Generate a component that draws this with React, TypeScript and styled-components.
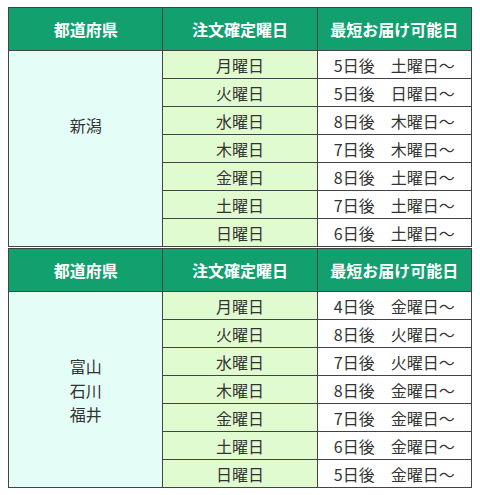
import React from "react";
import styled, { createGlobalStyle } from "styled-components";

const Global = createGlobalStyle`
  body {
    margin: 0;
    padding: 7px 8px;
    background: #ffffff;
    font-family: "Noto Sans CJK JP", "Noto Sans", sans-serif;
    color: #333333;
  }
`;

const Wrap = styled.div`
  width: 464px;
  display: flex;
  flex-direction: column;
  gap: 1px;
`;

const Table = styled.table`
  width: 464px;
  border-collapse: collapse;
  table-layout: fixed;
  border: 1px solid #444;
`;

const Th = styled.th`
  background: #12a06f;
  color: #ffffff;
  font-weight: 700;
  font-size: 16px;
  line-height: 24px;
  height: 42px;
  padding: 0;
  border: 1px solid #444;
  text-align: center;
`;

const Td = styled.td<{ $kind: "pref" | "day" | "deliv" }>`
  font-size: 16px;
  line-height: 24px;
  height: 27px;
  padding: 0;
  border: 1px solid #444;
  text-align: center;
  vertical-align: middle;
  color: #333;
  background: ${(p) =>
    p.$kind === "pref" ? "#e4fdf6" : p.$kind === "day" ? "#e1fbd0" : "#ffffff"};
`;

const Blank = styled.div`
  height: 24px;
`;

type Block = { prefs: string[]; blankLines: number; rows: [string, string][] };

const days = ["月曜日", "火曜日", "水曜日", "木曜日", "金曜日", "土曜日", "日曜日"];

const blocks: Block[] = [
  {
    prefs: ["新潟"],
    blankLines: 2,
    rows: [
      ["5日後", "土曜日"],
      ["5日後", "日曜日"],
      ["8日後", "木曜日"],
      ["7日後", "木曜日"],
      ["8日後", "土曜日"],
      ["7日後", "土曜日"],
      ["6日後", "土曜日"],
    ],
  },
  {
    prefs: ["富山", "石川", "福井"],
    blankLines: 0,
    rows: [
      ["4日後", "金曜日"],
      ["8日後", "火曜日"],
      ["7日後", "火曜日"],
      ["8日後", "金曜日"],
      ["7日後", "金曜日"],
      ["6日後", "金曜日"],
      ["5日後", "金曜日"],
    ],
  },
];

export default function App() {
  return (
    <>
      <Global />
      <Wrap>
        {blocks.map((b, bi) => (
          <Table key={bi}>
            <thead>
              <tr>
                <Th>都道府県</Th>
                <Th>注文確定曜日</Th>
                <Th>最短お届け可能日</Th>
              </tr>
            </thead>
            <tbody>
              {b.rows.map((r, i) => (
                <tr key={i}>
                  {i === 0 && (
                    <Td $kind="pref" rowSpan={7}>
                      {b.prefs.map((p) => (
                        <div key={p}>{p}</div>
                      ))}
                      {Array.from({ length: b.blankLines }).map((_, k) => (
                        <Blank key={k} />
                      ))}
                    </Td>
                  )}
                  <Td $kind="day">{days[i]}</Td>
                  <Td $kind="deliv">
                    {r[0]}　{r[1]}～
                  </Td>
                </tr>
              ))}
            </tbody>
          </Table>
        ))}
      </Wrap>
    </>
  );
}
